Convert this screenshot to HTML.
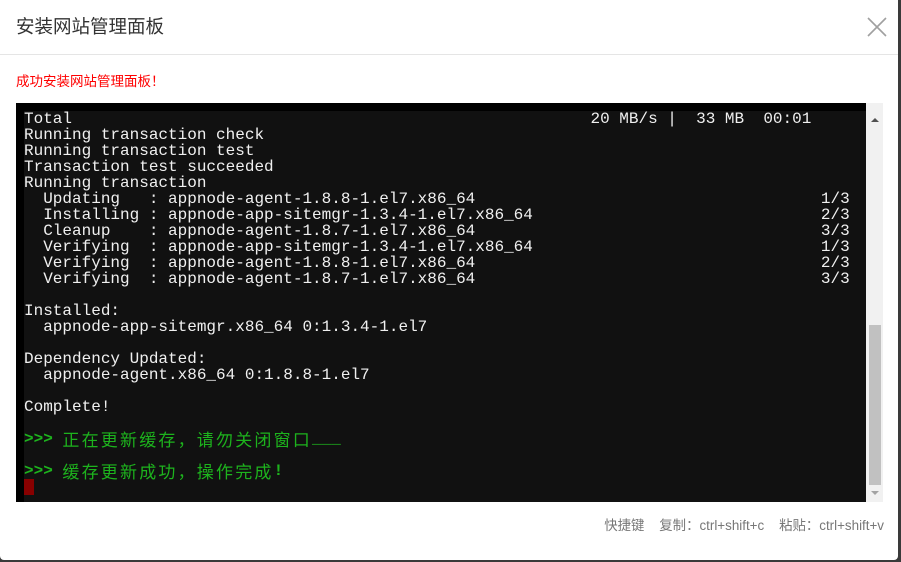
<!DOCTYPE html>
<html><head><meta charset="utf-8"><style>
*{margin:0;padding:0;box-sizing:border-box}
body{width:901px;height:562px;background:#3a3a3a;overflow:hidden;position:relative;font-family:"Liberation Sans","Noto Sans CJK SC",sans-serif}
.modal{position:absolute;left:0;top:0;width:898px;height:560px;background:#fff;border-radius:0 0 4px 4px}
.hd{height:55px;border-bottom:1px solid #e5e5e5;padding-left:16px;font-size:18.5px;line-height:54px;color:#333}
.close{position:absolute;left:866px;top:16px}
.msg{position:absolute;left:16px;top:70px;font-size:13.5px;color:#f00}
.term{position:absolute;left:16px;top:103px;width:850px;height:399px;background:#000}
.inner{position:absolute;left:8px;top:8px;right:0;bottom:0;background:#111}
pre{position:absolute;left:8px;top:8px;font-family:"Liberation Mono","Noto Sans CJK SC",monospace;font-size:16px;line-height:16px;color:#f0f0f0;white-space:pre}
.g{color:#1db31d;font-weight:bold}
.c{font-family:"Noto Sans CJK SC",sans-serif;font-size:17px;letter-spacing:2.2px;font-weight:normal;vertical-align:top;line-height:16px}
.cur{display:inline-block;width:10px;height:16px;background:#800;vertical-align:top}
.sb{position:absolute;left:866px;top:103px;width:17px;height:399px;background:#f1f1f1}
.thumb{position:absolute;left:3px;top:222px;width:12px;height:160px;background:#c1c1c1}
.up,.dn{position:absolute;left:5px;width:0;height:0;border-left:4px solid transparent;border-right:4px solid transparent}
.up{top:15px;border-bottom:4px solid #505050}
.dn{top:388px;border-top:4px solid #a3a3a3}
.ft{position:absolute;right:14px;top:514px;font-size:13.4px;color:#777}
</style></head><body>
<div class="modal">
<div class="hd">安装网站管理面板</div>
<svg class="close" width="22" height="22" viewBox="0 0 22 22"><path d="M2 2L20 20M20 2L2 20" stroke="#a0a0a0" stroke-width="1.6"/></svg>
<div class="msg">成功安装网站管理面板！</div>
<div class="term"><div class="inner"></div>
<pre>Total                                                      20 MB/s |  33 MB  00:01
Running transaction check
Running transaction test
Transaction test succeeded
Running transaction
  Updating   : appnode-agent-1.8.8-1.el7.x86_64                                    1/3
  Installing : appnode-app-sitemgr-1.3.4-1.el7.x86_64                              2/3
  Cleanup    : appnode-agent-1.8.7-1.el7.x86_64                                    3/3
  Verifying  : appnode-app-sitemgr-1.3.4-1.el7.x86_64                              1/3
  Verifying  : appnode-agent-1.8.8-1.el7.x86_64                                    2/3
  Verifying  : appnode-agent-1.8.7-1.el7.x86_64                                    3/3

Installed:
  appnode-app-sitemgr.x86_64 0:1.3.4-1.el7

Dependency Updated:
  appnode-agent.x86_64 0:1.8.8-1.el7

Complete!

<span class="g">&gt;&gt;&gt; <span class="c">正在更新缓存，请勿关闭窗口</span>___</span>

<span class="g">&gt;&gt;&gt; <span class="c">缓存更新成功，操作完成</span>!</span>
<span class="cur"></span></pre>
</div>
<div class="sb"><div class="up"></div><div class="thumb"></div><div class="dn"></div></div>
<div class="ft">快捷键&nbsp;&nbsp;&nbsp;&nbsp;复制：ctrl+shift+c&nbsp;&nbsp;&nbsp;&nbsp;粘贴：ctrl+shift+v</div>
</div>
</body></html>
